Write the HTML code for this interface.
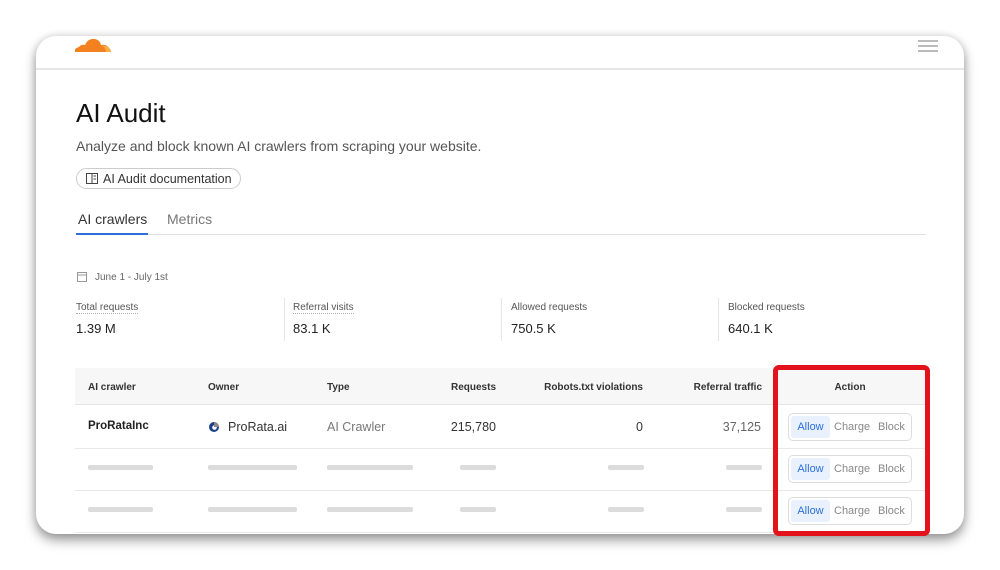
<!DOCTYPE html>
<html><head><style>
*{margin:0;padding:0;box-sizing:border-box}
body{width:1000px;height:570px;background:#fff;font-family:"Liberation Sans",sans-serif;position:relative;overflow:hidden;color:#222}
.card{position:absolute;left:36px;top:36px;width:928px;height:498px;background:#fff;border-radius:20px;box-shadow:0 6px 12px rgba(0,0,0,.4),0 0 8px rgba(0,0,0,.12);overflow:hidden}
.hdr{position:absolute;left:0;top:0;width:100%;height:34px;border-bottom:2px solid #e6e6e6}
.a{position:absolute;white-space:nowrap}
.sk{position:absolute;height:5px;background:#dcdcdc;border-radius:2px}
.btn{position:absolute;left:788px;width:124px;height:28px;border:1px solid #ddd;border-radius:5px;font-size:11px;color:#888}
.btn span{position:absolute;top:7px}
.btn .al{left:2px;top:2px;width:39px;height:22px;background:#e8f1fd;color:#2c6fd6;text-align:center;line-height:22px;border-radius:3px}
</style></head><body>
<div class="card">
<div class="hdr">
<svg class="a" style="left:38px;top:0px" width="38" height="17" viewBox="0 0 38 17"><path d="M1 16 Q0 12 5 11 Q7 8 11 9 Q14 2 21 3 Q26 4 27 9 Q32 8 35 12 Q37 14 37 16Z" fill="#f48120"/><path d="M27 10 Q31 10 32 16 L37 16 Q36 11 31 10Z" fill="#faad3f"/></svg>
<div class="a" style="left:882px;top:4px;width:20px;height:2px;background:#bbb;box-shadow:0 5px 0 #bbb,0 10px 0 #bbb"></div>
</div>
</div>
<div class="a" style="left:76px;top:98px;font-size:26px;color:#111">AI Audit</div>
<div class="a" style="left:76px;top:138px;font-size:14px;color:#555">Analyze and block known AI crawlers from scraping your website.</div>
<div class="a" style="left:76px;top:168px;width:165px;height:21px;border:1px solid #ccc;border-radius:11px;font-size:12.5px;color:#333;padding:3px 0 0 26px">AI Audit documentation</div>
<svg class="a" style="left:86px;top:173px" width="12" height="11" viewBox="0 0 12 11"><rect x=".5" y=".5" width="11" height="10" fill="none" stroke="#444"/><line x1="6" y1="0" x2="6" y2="11" stroke="#444"/><line x1="7.5" y1="3" x2="10" y2="3" stroke="#444"/><line x1="7.5" y1="6" x2="10" y2="6" stroke="#444"/></svg>
<div class="a" style="left:78px;top:211px;font-size:14px;color:#333">AI crawlers</div>
<div class="a" style="left:167px;top:211px;font-size:14px;color:#777">Metrics</div>
<div class="a" style="left:76px;top:234px;width:850px;height:1px;background:#e0e0e0"></div>
<div class="a" style="left:76px;top:233px;width:72px;height:2px;background:#2c6fd6"></div>
<svg class="a" style="left:77px;top:271px" width="10" height="11" viewBox="0 0 10 11"><rect x=".5" y="1.5" width="9" height="9" fill="none" stroke="#999"/><line x1="0" y1="4" x2="10" y2="4" stroke="#999"/></svg>
<div class="a" style="left:95px;top:272px;font-size:10px;color:#666">June 1 - July 1st</div>
<div class="a" style="left:76px;top:302px;font-size:10px;color:#555;border-bottom:1px dotted #aaa">Total requests</div>
<div class="a" style="left:76px;top:321px;font-size:13px;color:#222">1.39 M</div>
<div class="a" style="left:284px;top:298px;width:1px;height:43px;background:#e6e6e6"></div>
<div class="a" style="left:293px;top:302px;font-size:10px;color:#555;border-bottom:1px dotted #aaa">Referral visits</div>
<div class="a" style="left:293px;top:321px;font-size:13px;color:#222">83.1 K</div>
<div class="a" style="left:501px;top:298px;width:1px;height:43px;background:#e6e6e6"></div>
<div class="a" style="left:511px;top:302px;font-size:10px;color:#555">Allowed requests</div>
<div class="a" style="left:511px;top:321px;font-size:13px;color:#222">750.5 K</div>
<div class="a" style="left:718px;top:298px;width:1px;height:43px;background:#e6e6e6"></div>
<div class="a" style="left:728px;top:302px;font-size:10px;color:#555">Blocked requests</div>
<div class="a" style="left:728px;top:321px;font-size:13px;color:#222">640.1 K</div>
<div class="a" style="left:75px;top:368px;width:850px;height:37px;background:#f7f7f7;border-bottom:1px solid #e6e6e6"></div>
<div class="a" style="left:75px;top:448px;width:850px;height:1px;background:#e8e8e8"></div>
<div class="a" style="left:75px;top:490px;width:850px;height:1px;background:#e8e8e8"></div>
<div class="a" style="left:75px;top:532px;width:850px;height:1px;background:#e8e8e8"></div>
<div style="font-size:10px;color:#333;font-weight:bold">
<div class="a" style="left:88px;top:382px">AI crawler</div>
<div class="a" style="left:208px;top:382px">Owner</div>
<div class="a" style="left:327px;top:382px">Type</div>
<div class="a" style="left:436px;top:382px;width:60px;text-align:right">Requests</div>
<div class="a" style="left:523px;top:382px;width:120px;text-align:right">Robots.txt violations</div>
<div class="a" style="left:662px;top:382px;width:100px;text-align:right">Referral traffic</div>
<div class="a" style="left:810px;top:382px;width:80px;text-align:center">Action</div>
</div>
<div class="a" style="left:88px;top:420px;font-size:11.5px;font-weight:bold;color:#222">ProRataInc</div>
<svg class="a" style="left:208px;top:421px" width="12" height="12" viewBox="0 0 12 12"><circle cx="6" cy="6" r="5" fill="#1b3f8a"/><circle cx="6.5" cy="6.5" r="2.3" fill="#fff"/><path d="M6 1 A5 5 0 0 1 11 6 L6 6Z" fill="#888"/></svg>
<div class="a" style="left:228px;top:420px;font-size:12.5px;color:#333">ProRata.ai</div>
<div class="a" style="left:327px;top:420px;font-size:12.5px;color:#777">AI Crawler</div>
<div class="a" style="left:436px;top:420px;width:60px;text-align:right;font-size:12.5px;color:#333">215,780</div>
<div class="a" style="left:583px;top:420px;width:60px;text-align:right;font-size:12.5px;color:#333">0</div>
<div class="a" style="left:700px;top:420px;width:61px;text-align:right;font-size:12.5px;color:#666">37,125</div>
<div class="sk" style="left:88px;top:465px;width:65px"></div><div class="sk" style="left:208px;top:465px;width:89px"></div><div class="sk" style="left:327px;top:465px;width:86px"></div><div class="sk" style="left:460px;top:465px;width:36px"></div><div class="sk" style="left:608px;top:465px;width:36px"></div><div class="sk" style="left:726px;top:465px;width:36px"></div>
<div class="sk" style="left:88px;top:507px;width:65px"></div><div class="sk" style="left:208px;top:507px;width:89px"></div><div class="sk" style="left:327px;top:507px;width:86px"></div><div class="sk" style="left:460px;top:507px;width:36px"></div><div class="sk" style="left:608px;top:507px;width:36px"></div><div class="sk" style="left:726px;top:507px;width:36px"></div>
<div class="btn" style="top:413px"><span class="al">Allow</span><span style="left:45px">Charge</span><span style="left:89px">Block</span></div>
<div class="btn" style="top:455px"><span class="al">Allow</span><span style="left:45px">Charge</span><span style="left:89px">Block</span></div>
<div class="btn" style="top:497px"><span class="al">Allow</span><span style="left:45px">Charge</span><span style="left:89px">Block</span></div>
<div class="a" style="left:773px;top:365px;width:157px;height:171px;border:5px solid #e3131b;border-radius:6px"></div>
</body></html>
